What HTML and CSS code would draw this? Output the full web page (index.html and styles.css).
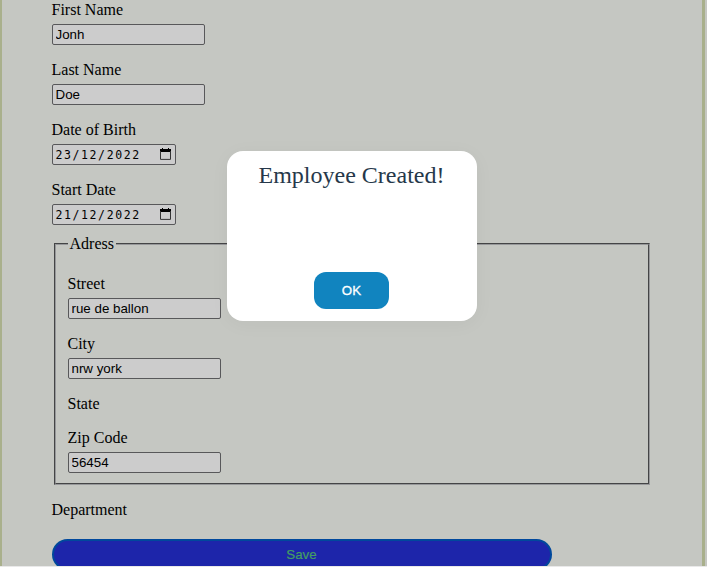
FILE: index.html
```html
<!DOCTYPE html>
<html lang="en">
<head>
<meta charset="utf-8">
<title>Create Employee</title>
<link rel="stylesheet" href="styles.css">
</head>
<body>
<main class="page">
  <form class="form">
    <div class="field"><label for="first">First Name</label><input id="first" type="text" value="Jonh"></div>
    <div class="field"><label for="last">Last Name</label><input id="last" type="text" value="Doe"></div>
    <div class="field"><label>Date of Birth</label>
      <div class="date"><span>23/12/2022</span><svg class="cal" viewBox="0 0 11 12"><path d="M0 1h11v3H0zM2 0h1v1H2zM8 0h1v1H8z" fill="#000"/><path d="M.5 3v8.4h10V3" fill="none" stroke="#333"/></svg></div>
    </div>
    <div class="field"><label>Start Date</label>
      <div class="date"><span>21/12/2022</span><svg class="cal" viewBox="0 0 11 12"><path d="M0 1h11v3H0zM2 0h1v1H2zM8 0h1v1H8z" fill="#000"/><path d="M.5 3v8.4h10V3" fill="none" stroke="#333"/></svg></div>
    </div>
    <fieldset class="address">
      <legend>Adress</legend>
      <div class="field"><label for="street">Street</label><input id="street" type="text" value="rue de ballon"></div>
      <div class="field"><label for="city">City</label><input id="city" type="text" value="nrw york"></div>
      <div class="field"><label>State</label></div>
      <div class="field"><label for="zip">Zip Code</label><input id="zip" type="text" value="56454"></div>
    </fieldset>
    <div class="field department"><label>Department</label></div>
    <button class="save" type="button">Save</button>
  </form>
</main>
<div class="modal" role="dialog">
  <p class="message">Employee Created!</p>
  <button class="ok" type="button">OK</button>
</div>
</body>
</html>
```
FILE: styles.css
```css
* { box-sizing: border-box; }

body {
  margin: 0;
  height: 567px;
  overflow: hidden;
  background: #e9e9e9;
  font: 16px/18px "Liberation Serif", serif;
  color: #000;
}

.page {
  height: 566px;
  overflow: hidden;
  margin-right: 2px;
  padding: 1px 0 0 50px;
  border-left: 2px solid #a9b08c;
  border-right: 3px solid #a9b08c;
  background: #c5c7c2;
  box-shadow: 2px 0 #c5c7c2;
}

.form { width: 600px; }

.field {
  display: flex;
  flex-direction: column;
  align-items: flex-start;
  gap: 5px;
  margin-bottom: 16px;
}

.field label { margin-left: -.5px; }

.field input,
.date {
  width: 153px;
  height: 21px;
  margin: 0;
  padding: 1px 2.5px;
  border: 1px solid #58585a;
  border-radius: 2px;
  background: #ccc;
  color: #000;
  font: 13.333px "Liberation Sans", sans-serif;
}

.date {
  display: flex;
  align-items: center;
  justify-content: space-between;
  width: 124px;
  padding-right: 4px;
  font: 11.5px "DejaVu Sans Mono", monospace;
  letter-spacing: 1.6px;
}

.date span { width: 88px; white-space: nowrap; }

.cal { width: 11px; height: 12px; margin-top: -1px; }

.address {
  width: 596px;
  height: 250px;
  margin: -6px 2px 0;
  padding: 22px 12px 0;
  border: 2px groove #97989a;
}

.address legend { padding: 0 2px; margin-left: -.5px; }

.department { margin: 16px 0 20px; }

.save {
  display: block;
  width: 500px;
  height: 31px;
  padding: 0 1px 0 0;
  border: 2px solid #00489c;
  border-radius: 16px;
  background: #1d25aa;
  color: #449d63;
  font: 13.333px "Liberation Sans", sans-serif;
  -webkit-text-stroke: .2px currentColor;
}

.modal {
  position: absolute;
  left: 227px;
  top: 151px;
  display: flex;
  flex-direction: column;
  align-items: center;
  justify-content: space-between;
  width: 250px;
  height: 170px;
  padding: 10px 1px 12px 0;
  border-radius: 16px;
  background: #fff;
  box-shadow: 0 3px 20px rgba(0, 0, 0, .04);
}

.message {
  margin: 0;
  color: #26384a;
  font-size: 24px;
  line-height: 28px;
}

.ok {
  width: 75px;
  height: 37px;
  padding: 0;
  border: 0;
  border-radius: 12px;
  background: #1184bf;
  color: #fff;
  font: 13.333px "Liberation Sans", sans-serif;
  -webkit-text-stroke: .3px currentColor;
}
```
